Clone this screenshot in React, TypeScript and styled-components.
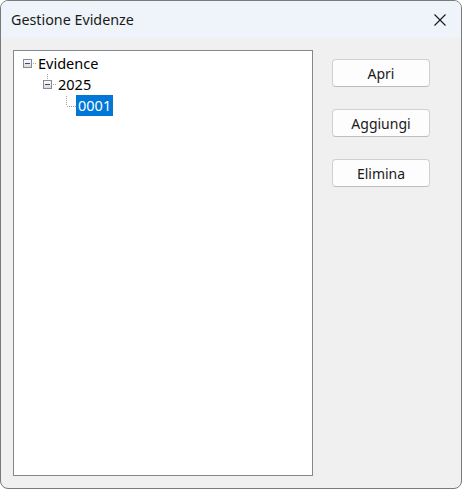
import React from "react";
import styled, { createGlobalStyle } from "styled-components";

const Global = createGlobalStyle`
  html, body {
    margin: 0;
    padding: 0;
    background: #ffffff;
  }
  * { box-sizing: border-box; }
`;

const FONT = `"Noto Sans", "Open Sans", "Liberation Sans", sans-serif`;

const Window = styled.div`
  width: 462px;
  height: 489px;
  border: 1px solid #7a7a7a;
  border-radius: 8px;
  overflow: hidden;
  display: flex;
  flex-direction: column;
  background: #f0f0f0;
  font-family: ${FONT};
  color: #1a1a1a;
`;

const TitleBar = styled.div`
  height: 37px;
  flex: none;
  display: flex;
  align-items: center;
  justify-content: space-between;
  padding: 0 15px 0 10px;
  background: #eef4f9;
`;

const Title = styled.span`
  font-size: 14.3px;
`;

const CloseButton = styled.div`
  width: 12px;
  height: 12px;
  display: flex;
  margin-top: 1px;
`;

const Body = styled.div`
  flex: 1;
  display: flex;
  padding: 12px;
  gap: 19px;
`;

const TreeBox = styled.div`
  width: 300px;
  height: 426px;
  background: #ffffff;
  border: 1px solid #828790;
  padding: 2px 0 0 9px;
  display: flex;
  flex-direction: column;
`;

const Row = styled.div<{ $level: number }>`
  height: 21px;
  display: flex;
  align-items: stretch;
  margin-left: ${(p) => p.$level * 20}px;
`;

const Glyph = styled.svg`
  width: 13px;
  height: 21px;
  flex: none;
  shape-rendering: crispEdges;
`;

const Label = styled.span<{ $selected?: boolean }>`
  display: flex;
  align-items: center;
  padding: 0 2px;
  font-size: 14.5px;
  line-height: 21px;
  background: ${(p) => (p.$selected ? "#0078d7" : "transparent")};
  color: ${(p) => (p.$selected ? "#ffffff" : "#000000")};
`;

const Actions = styled.div`
  display: flex;
  flex-direction: column;
  gap: 22px;
  padding-top: 9px;
`;

const Button = styled.button`
  width: 98px;
  height: 28px;
  background: #fdfdfd;
  border: 1px solid #d0d0d0;
  border-bottom-color: #bdbdbd;
  border-radius: 4px;
  font-family: ${FONT};
  font-size: 14px;
  color: #1a1a1a;
  padding: 0;
  display: flex;
  align-items: center;
  justify-content: center;
`;

const DOT = "#a0a0a0";

/* Expander box with a minus sign, plus an optional link up to the parent. */
function Expander({ linkUp }: { linkUp?: boolean }) {
  return (
    <Glyph viewBox="0 0 13 21">
      <defs>
        <linearGradient id="exp" x1="0" y1="0" x2="0" y2="1">
          <stop offset="0" stopColor="#ffffff" />
          <stop offset="1" stopColor="#d8d8d8" />
        </linearGradient>
      </defs>
      {linkUp && (
        <line x1="4.5" y1="0" x2="4.5" y2="6" stroke={DOT} strokeDasharray="1 1" />
      )}
      <rect x="0.5" y="6.5" width="8" height="8" fill="url(#exp)" stroke="#8a8a8a" />
      <line x1="2" y1="10.5" x2="7" y2="10.5" stroke="#2f4d8f" />
      <line x1="10" y1="10.5" x2="13" y2="10.5" stroke={DOT} strokeDasharray="1 1" />
    </Glyph>
  );
}

/* Leaf connector: a dotted elbow from the parent down and across. */
function Leaf() {
  return (
    <Glyph viewBox="0 0 13 21">
      <line x1="3.5" y1="1" x2="3.5" y2="11" stroke={DOT} strokeDasharray="1 1" />
      <line x1="4" y1="11.5" x2="13" y2="11.5" stroke={DOT} strokeDasharray="1 1" />
    </Glyph>
  );
}

export default function App() {
  return (
    <>
      <Global />
      <Window>
        <TitleBar>
          <Title>Gestione Evidenze</Title>
          <CloseButton>
            <svg width="12" height="12" viewBox="0 0 12 12">
              <path d="M0.5 0.5 L11.5 11.5 M11.5 0.5 L0.5 11.5" stroke="#1a1a1a" strokeWidth="1.1" />
            </svg>
          </CloseButton>
        </TitleBar>
        <Body>
          <TreeBox>
            <Row $level={0}>
              <Expander />
              <Label>Evidence</Label>
            </Row>
            <Row $level={1}>
              <Expander linkUp />
              <Label>2025</Label>
            </Row>
            <Row $level={2}>
              <Leaf />
              <Label $selected>0001</Label>
            </Row>
          </TreeBox>
          <Actions>
            <Button>Apri</Button>
            <Button>Aggiungi</Button>
            <Button>Elimina</Button>
          </Actions>
        </Body>
      </Window>
    </>
  );
}
